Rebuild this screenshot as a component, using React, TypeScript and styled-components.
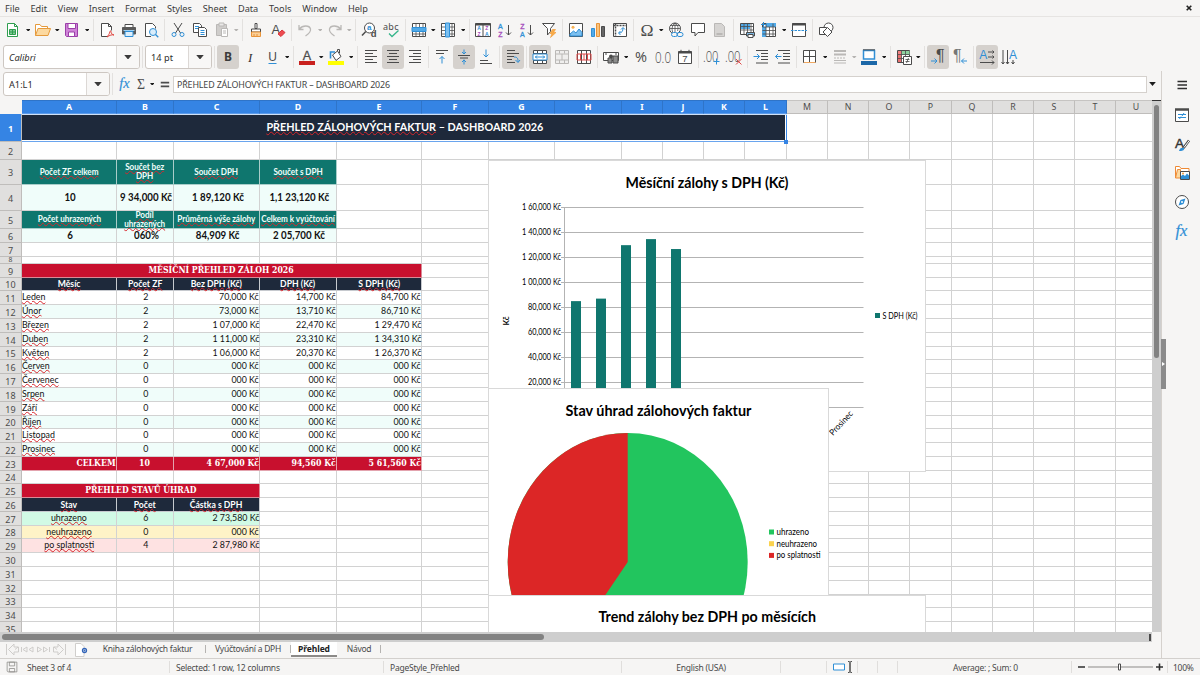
import React, { ReactNode } from 'react';
import styled, { createGlobalStyle, css } from 'styled-components';

const GlobalStyle = createGlobalStyle`
  * {
    box-sizing: border-box;
  }

  body {
    margin: 0;
    overflow: hidden;
    font-family: 'Noto Sans', sans-serif;
    font-size: 9.2px;
    color: #3b3b3b;
    background: #f6f5f4;
  }
`;

const Window = styled.div`
  width: 1200px;
  height: 675px;
  display: flex;
  flex-direction: column;
  background: #f6f5f4;
  overflow: hidden;
`;

const MenuBar = styled.nav`
  height: 17px;
  flex: none;
  display: flex;
  align-items: center;
  padding: 0 8px 0 5px;
  gap: 10.8px;
  border-bottom: 1px solid #e6e4e2;
`;

const MenuItem = styled.span`
  white-space: nowrap;
`;

const CloseButton = styled.span`
  margin-left: auto;
  display: flex;
`;

const Toolbar = styled.div<{ $height: number; $start: number }>`
  height: ${({ $height }) => $height}px;
  flex: none;
  display: flex;
  align-items: center;
  padding-left: ${({ $start }) => $start}px;
`;

const ToolButton = styled.span<{ $active?: boolean }>`
  width: 22px;
  height: 24px;
  flex: none;
  display: flex;
  align-items: center;
  justify-content: center;
  border-radius: 3px;
  background: ${({ $active }) => ($active ? '#d5d1cd' : 'transparent')};
`;

const Separator = styled.span`
  width: 5.1px;
  height: 22px;
  flex: none;
  display: flex;
  justify-content: center;

  &::before {
    content: '';
    width: 1px;
    height: 100%;
    background: #e3e1df;
  }
`;

const ArrowSlot = styled.span<{ $dim?: boolean }>`
  width: 7.5px;
  flex: none;
  display: flex;
  justify-content: center;
  color: ${({ $dim }) => ($dim ? '#b5b3b1' : '#1c1c1c')};
`;

const ComboBox = styled.div<{ $width: number }>`
  width: ${({ $width }) => $width}px;
  height: 24px;
  flex: none;
  display: flex;
  border: 1px solid #cdc7c2;
  border-radius: 3px;
  background: #fff;
  overflow: hidden;
`;

const ComboText = styled.span<{ $italic?: boolean }>`
  flex: 1;
  display: flex;
  align-items: center;
  padding-left: 5px;
  color: #2e2e2e;
  font-style: ${({ $italic }) => ($italic ? 'italic' : 'normal')};
`;

const ComboButton = styled.span`
  width: 23px;
  display: flex;
  align-items: center;
  justify-content: center;
  border-left: 1px solid #dcd8d5;
  background: #f8f7f6;
`;

const Workspace = styled.div`
  flex: 1;
  min-height: 0;
  display: flex;
`;

const Editor = styled.main`
  width: 1161px;
  display: flex;
  flex-direction: column;
`;

const FormulaBar = styled.div`
  height: 29px;
  flex: none;
  display: flex;
  align-items: center;
  padding: 0 5px 3px 3px;
`;

const FormulaButton = styled.span<{ $width: number }>`
  width: ${({ $width }) => $width}px;
  flex: none;
  display: flex;
  justify-content: center;
`;

const FormulaInput = styled.div`
  flex: 1;
  height: 17px;
  margin-right: 2px;
  display: flex;
  align-items: center;
  padding-left: 3px;
  background: #fff;
  border: 1px solid #d5d1cd;
  color: #444;
  font-size: 8.9px;
  letter-spacing: -0.14px;
`;

const SheetFrame = styled.div`
  height: 532px;
  flex: none;
  display: flex;
`;

const Sheet = styled.div`
  width: 1152px;
  position: relative;
  overflow: hidden;
  background: #fff;
`;

const Row = styled.div<{ $height: number }>`
  display: flex;
  height: ${({ $height }) => $height}px;
`;

const Corner = styled.div`
  width: 22px;
  flex: none;
  background: #f6f5f4;
`;

const ColumnHeader = styled.div<{ $width: number; $selected: boolean }>`
  width: ${({ $width }) => $width}px;
  flex: none;
  display: flex;
  align-items: center;
  justify-content: center;
  border-right: 1px solid ${({ $selected }) => ($selected ? '#2f74c8' : '#bfbdbb')};
  border-top: 1px solid ${({ $selected }) => ($selected ? '#2f74c8' : '#c6c4c2')};
  border-bottom: 1px solid ${({ $selected }) => ($selected ? '#5c9cec' : '#bfbdbb')};
  background: ${({ $selected }) => ($selected ? '#3584e4' : '#e0dfde')};
  color: ${({ $selected }) => ($selected ? '#fff' : '#4c4c4c')};
  font-size: 8.8px;
  font-weight: ${({ $selected }) => ($selected ? 700 : 400)};
`;

const RowHeader = styled.div<{ $selected: boolean; $small: boolean }>`
  width: 22px;
  flex: none;
  display: flex;
  align-items: center;
  justify-content: center;
  border-right: 1px solid #bfbdbb;
  border-bottom: 1px solid #bfbdbb;
  background: ${({ $selected }) => ($selected ? '#3584e4' : '#e0dfde')};
  color: ${({ $selected }) => ($selected ? '#fff' : '#4c4c4c')};
  font-size: ${({ $small }) => ($small ? 6.8 : 9)}px;
  font-weight: ${({ $selected }) => ($selected ? 700 : 400)};
  line-height: ${({ $small }) => ($small ? '6px' : '13px')};
  padding-top: ${({ $small }) => ($small ? 0 : 1)}px;
`;

type CellKind = 'plain' | 'kpiHead' | 'kpi' | 'section' | 'head' | 'total' | 'title';

const serifBold = css`
  font-family: 'DejaVu Serif Condensed', 'DejaVu Serif', serif;
  font-stretch: condensed;
  font-size: 8.8px;
  font-weight: 700;
  color: #fff;
  background: #c8102e;
`;

const cellKinds = {
  plain: css`
    font-size: 9.3px;
    color: #111;
  `,
  kpiHead: css`
    font-size: 8.6px;
    font-weight: 700;
    line-height: 8.6px;
    letter-spacing: -0.05px;
    color: #f0fdfa;
    background: #0f766e;
    border-color: #a9cdc9;
  `,
  kpi: css`
    font-size: 10.5px;
    font-weight: 700;
    color: #111;
    background: #f0fdfa;
  `,
  section: css`
    ${serifBold}
    border-color: #d98a96;
  `,
  total: css`
    ${serifBold}
    border-color: #e3a3ae;
  `,
  head: css`
    font-size: 9.2px;
    font-weight: 700;
    color: #fff;
    background: #1e293b;
    border-color: #c6c9ce;
  `,
  title: css`
    font-size: 12px;
    font-weight: 700;
    color: #fff;
    background: #1e293b;
    border: 0;
    padding-bottom: 2px;
    box-shadow: inset 0 1px 0 #cfe0f6, inset 0 -1px 0 #6aa5ee, inset -1px 0 0 #3584e4, inset 0 -2px 0 #fff,
      inset -2px 0 0 #fff;
  `,
};

// horizontal squeeze that gives Lato the narrower Calibri proportions
const squeeze: Record<CellKind, number> = {
  plain: 0.95,
  kpiHead: 0.945,
  kpi: 0.925,
  section: 0.98,
  total: 0.99,
  head: 0.94,
  title: 0.9,
};

const Cell = styled.div<{ $width: number; $kind: CellKind; $align?: string; $bg?: string; $nudge?: boolean }>`
  width: ${({ $width }) => $width}px;
  flex: none;
  display: flex;
  align-items: center;
  justify-content: ${({ $align }) => $align || 'center'};
  border-right: 1px solid #d2d2d2;
  border-bottom: 1px solid #d2d2d2;
  font-family: Lato, sans-serif;
  line-height: 1.08;
  text-align: center;
  white-space: pre;
  ${({ $kind }) => cellKinds[$kind]}
  ${({ $bg }) => $bg && `background: ${$bg};`}
  ${({ $nudge }) => $nudge && 'padding-left: 2px;'}
`;

const origins: Record<string, string> = { 'flex-start': 'left', 'flex-end': 'right' };

const CellText = styled.span<{ $kind: CellKind; $align?: string }>`
  display: inline-block;
  transform: scaleX(${({ $kind }) => squeeze[$kind]});
  transform-origin: ${({ $align }) => origins[$align || ''] || 'center'};
`;

const Misspelled = styled.span`
  text-decoration: underline wavy #d8262c 0.6px;
  text-underline-offset: -0.4px;
  text-decoration-skip-ink: none;
`;

const SelectionHandle = styled.div`
  position: absolute;
  left: 784px;
  top: 40px;
  width: 4px;
  height: 4px;
  background: #3584e4;
`;

const ChartObject = styled.section<{ $x: number; $y: number; $width: number; $height: number }>`
  position: absolute;
  left: ${({ $x }) => $x}px;
  top: ${({ $y }) => $y}px;
  width: ${({ $width }) => $width}px;
  height: ${({ $height }) => $height}px;
  background: #fff;
  border: 1px solid #d9d9d9;
  overflow: hidden;

  svg {
    display: block;
    font-family: Lato, sans-serif;
  }
`;

const VerticalScroll = styled.div`
  width: 9px;
  padding: 4px 2px 0;
  background: #cecece;
  border-top: 1px solid #333;
`;

const VerticalThumb = styled.div`
  height: 253px;
  border-radius: 3px;
  background: #828282;
`;

const HorizontalScroll = styled.div`
  width: 1152px;
  height: 10px;
  flex: none;
  display: flex;
  align-items: center;
  justify-content: space-between;
  padding: 0 1px 0 2px;
  background: #cecece;
`;

const HorizontalThumb = styled.div`
  width: 542px;
  height: 6px;
  border-radius: 3px;
  background: #828282;
`;

const ScrollEnd = styled.div`
  width: 2px;
  height: 7px;
  background: #4a4a4a;
`;

const TabBar = styled.div`
  height: 16px;
  flex: none;
  display: flex;
  align-items: flex-start;
  padding-left: 6px;
`;

const TabNav = styled.div`
  width: 84px;
  height: 15px;
  display: flex;
  align-items: center;
  gap: 8px;
`;

const Tab = styled.div<{ $width: number; $active?: boolean }>`
  width: ${({ $width }) => $width}px;
  height: 15px;
  display: flex;
  align-items: center;
  justify-content: center;
  border-bottom: 2px solid ${({ $active }) => ($active ? '#8c8a88' : 'transparent')};
  background: ${({ $active }) => ($active ? '#fff' : 'transparent')};
  color: ${({ $active }) => ($active ? '#222' : '#4a4a4a')};
  font-weight: ${({ $active }) => ($active ? 700 : 400)};
  font-size: 8.5px;
  letter-spacing: ${({ $active }) => ($active ? -0.1 : -0.26)}px;
  white-space: nowrap;
`;

const TabDivider = styled.span<{ $hidden?: boolean }>`
  width: 1px;
  height: 8px;
  margin-top: 3px;
  background: ${({ $hidden }) => ($hidden ? 'transparent' : '#b5b3b1')};
`;

const SideBar = styled.aside`
  flex: 1;
  display: flex;
  border-left: 1px solid #d5d1cd;
`;

const SideHandle = styled.div`
  width: 5px;
  height: 50px;
  margin-top: 268px;
  margin-left: -1px;
  display: flex;
  align-items: center;
  background: #8b8b8b;
`;

const SideIcons = styled.div`
  flex: 1;
  display: flex;
  flex-direction: column;
  align-items: center;
  padding: 6px 3px 0 0;
`;

const SideIcon = styled.span<{ $gap?: number }>`
  height: 16px;
  margin-bottom: ${({ $gap }) => $gap ?? 13}px;
  display: flex;
  align-items: center;
`;

const StatusBar = styled.footer`
  height: 17px;
  flex: none;
  display: flex;
  align-items: center;
  border-top: 1px solid #d3d0cd;
  color: #4a4a4a;
  font-size: 8.5px;
  letter-spacing: -0.24px;
`;

const StatusField = styled.div<{ $width: number; $align?: string; $pad?: number }>`
  width: ${({ $width }) => $width}px;
  height: 12px;
  flex: none;
  display: flex;
  align-items: center;
  justify-content: ${({ $align }) => $align || 'flex-start'};
  gap: 9px;
  padding-left: ${({ $pad }) => $pad ?? 6}px;
  border-right: 1px solid #e0dedc;
  white-space: nowrap;

  &:last-child {
    border-right: 0;
  }
`;

const DARK = '#4b4b4b';
const BLUE = '#2f8fd6';
const PURPLE = '#a347ba';
const DIM = '#bab8b6';
const SANS = 'Liberation Sans, sans-serif';
const SERIF = 'Liberation Serif, serif';

const icons: Record<string, ReactNode> = {
  newSheet: (
    <>
      <path d="M2.500 1.500h7l3 3v10h-10z" fill="#fff" stroke="#2f9e4f" />
      <path d="M9.500 1.500v3h3" stroke="#2f9e4f" />
      <path d="M4.500 7.500h6v5h-6zM4.500 10h6M7.500 7.500v5" fill="#7fcb95" stroke="#2f9e4f" />
    </>
  ),
  open: (
    <>
      <path d="M.5 13.500v-11H5l1.500 2h6v2" fill="#fff" stroke="#e59a3c" />
      <path d="M.5 13.500l2.500-7h12.500l-2.500 7z" fill="#fcd9a0" stroke="#e59a3c" />
    </>
  ),
  save: (
    <>
      <path d="M1.500 1.500h12v13h-11l-1-1z" fill="#cf83d8" stroke="#9b3fa8" />
      <path d="M4 1.500h7.500v5H4z" fill="#fff" stroke="#9b3fa8" />
      <path d="M4.500 10h6v4.500h-6z" fill="#fff" stroke="#9b3fa8" />
    </>
  ),
  pdf: (
    <>
      <path d="M9 14.500H2.500v-13h7l3 3v4" fill="#fff" stroke={DARK} />
      <path d="M9.500 1.500v3h3" stroke={DARK} />
      <path d="M8 15c1-1.500 2.500-3 3-5.500 0-1 1-1 1 0 0 2 1 3 3 3.500-2-.5-4 0-7 2z" stroke="#e0443e" />
    </>
  ),
  print: (
    <>
      <path d="M4 5V2.500h8V5" fill="#fff" stroke={DARK} />
      <path d="M1.500 5.500h13V12h-13z" fill="#5a5a5a" stroke="#5a5a5a" />
      <path d="M4 9.500h8v5H4z" fill="#dceefb" stroke={BLUE} />
      <path d="M2.500 8.500h11" stroke="#9bd0f5" />
    </>
  ),
  preview: (
    <>
      <path d="M8 14.500H2.500v-13h7l3 3v2" fill="#fff" stroke={DARK} />
      <circle cx="10" cy="10" r="3.500" fill="#d9edfb" stroke={BLUE} />
      <path d="M12.500 12.500l2.800 2.800" stroke={BLUE} strokeWidth="1.300" />
    </>
  ),
  cut: (
    <>
      <path d="M4 1l6.500 10M12 1L5.500 11" stroke={DARK} />
      <circle cx="4" cy="12.500" r="2" stroke={BLUE} />
      <circle cx="12" cy="12.500" r="2" stroke={BLUE} />
    </>
  ),
  copy: (
    <>
      <path d="M1.500 1.500h6l2 2v7h-8z" fill="#fff" stroke={DARK} />
      <path d="M3 4.500h4M3 6.500h3" stroke={BLUE} />
      <path d="M6.500 5.500h6l2 2v7h-8z" fill="#fff" stroke={DARK} />
      <path d="M8.500 8.500h4M8.500 10.500h4M8.500 12.500h4" stroke={BLUE} />
    </>
  ),
  paste: (
    <>
      <path d="M2.500 2.500h10v11h-10z" fill="#cfcdcb" stroke={DIM} />
      <path d="M5 1h5v3H5z" fill="#e9e8e7" stroke={DIM} />
      <path d="M7.500 6.500h6v8h-6z" fill="#fff" stroke={DIM} />
      <path d="M9 9h3M9 11h3" stroke={DIM} />
    </>
  ),
  brush: (
    <>
      <path d="M7 1.500h2v5H7z" fill="#fff" stroke={DARK} />
      <path d="M3.500 7h9v3h-9z" fill="#fff" stroke={DARK} />
      <path d="M3.500 10h9v4.500h-9z" fill="#fbcf97" stroke="#e8943a" />
      <path d="M6 12v2M9 12v2" stroke="#e8943a" />
    </>
  ),
  clear: (
    <>
      <text x="1.500" y="11.500" fontSize="13" fontFamily={SANS} fill={DARK}>A</text>
      <path d="M8 12l4-4 3 2.500-4 4z" fill="#ee4b50" stroke="#d8363c" />
    </>
  ),
  undo: <path d="M2 3v4.500h4.500M2.500 7c3-4 10-4 11 0 .6 3-2 5-5 7" stroke={DIM} strokeWidth="1.300" />,
  redo: <path d="M14 3v4.500H9.500M13.500 7c-3-4-10-4-11 0-.6 3 2 5 5 7" stroke={DIM} strokeWidth="1.300" />,
  find: (
    <>
      <circle cx="8.500" cy="6" r="5" fill="#fff" stroke={DARK} />
      <path d="M4.800 9.500L1 13.500" stroke={DARK} strokeWidth="1.500" />
      <text x="6" y="8" fontSize="8" fontFamily={SANS} fontWeight="700" fill={BLUE}>a</text>
      <text x="9.800" y="15" fontSize="9.500" fontFamily={SANS} fontWeight="700" fill={DARK}>d</text>
    </>
  ),
  spell: (
    <>
      <text x="0" y="8" fontSize="9" fill={DARK} textLength="15.500">abc</text>
      <path d="M6 11.500l3 3 6.500-6" stroke="#35b58a" strokeWidth="1.300" />
    </>
  ),
  rowOps: (
    <>
      <path d="M1.500 1.500h13v13h-13z" fill="#fff" stroke={DARK} />
      <path d="M5 1.500v13M8.500 1.500v13M12 1.500v13M1.500 12h13" stroke={DARK} strokeWidth=".8" />
      <path d="M1 5.500h14v4H1z" fill="#52aae8" stroke={BLUE} />
    </>
  ),
  colOps: (
    <>
      <path d="M1.500 1.500h13v13h-13z" fill="#fff" stroke={DARK} />
      <path d="M1.500 5h13M1.500 8.500h13M1.500 12h13M12 1.500v13" stroke={DARK} strokeWidth=".8" />
      <path d="M5.500 1h4v14h-4z" fill="#7cc0f0" stroke={BLUE} />
    </>
  ),
  sort: (
    <>
      <path d="M.5 1.500h15v13H.5z" fill="#fff" stroke={DARK} />
      <path d="M.5 2.500h15" stroke={DARK} strokeWidth="2" />
      <path d="M8 2v12.500" stroke={DARK} />
      <g fontSize="5" fontWeight="700" fontFamily={SANS}>
        <text x="2.300" y="8" fill={BLUE}>A</text>
        <text x="2.500" y="14" fill={PURPLE}>Z</text>
        <text x="10.200" y="8" fill={PURPLE}>Z</text>
        <text x="10" y="14" fill={BLUE}>A</text>
      </g>
    </>
  ),
  sortAsc: (
    <>
      <text x="1" y="6.500" fontSize="7" fontFamily={SANS} fill={BLUE} stroke={BLUE} strokeWidth=".3">A</text>
      <text x="1.200" y="15" fontSize="7" fontFamily={SANS} fill={PURPLE} stroke={PURPLE} strokeWidth=".3">Z</text>
      <path d="M11.500 3v10M9 10.500l2.500 2.500 2.500-2.500" stroke={DARK} />
    </>
  ),
  sortDesc: (
    <>
      <text x="1.200" y="6.500" fontSize="7" fontFamily={SANS} fill={PURPLE} stroke={PURPLE} strokeWidth=".3">Z</text>
      <text x="1" y="15" fontSize="7" fontFamily={SANS} fill={BLUE} stroke={BLUE} strokeWidth=".3">A</text>
      <path d="M11.500 3v10M9 10.500l2.500 2.500 2.500-2.500" stroke={DARK} />
    </>
  ),
  filter: (
    <>
      <path d="M1.500 1.500h12l-4 5v3L6.500 13V6.500z" fill="#fff" stroke={DARK} />
      <path d="M11.500 7.500h3l-2 3h2.500l-5.500 5 1.500-4H9z" fill="#f9ad4a" stroke="#f2952b" strokeWidth=".6" />
    </>
  ),
  image: (
    <>
      <path d="M1.500 1.500h13v13h-13z" fill="#fff" stroke={DARK} />
      <circle cx="5" cy="5.300" r="1.500" fill="#f8b252" />
      <path d="M2 14v-2l3.500-3 2.500 2 3-4 3 3.500V14z" fill="#7cc0f0" stroke={BLUE} />
    </>
  ),
  chart: (
    <>
      <path d="M1.500 6.500h3v8h-3z" fill="#52aae8" stroke={BLUE} />
      <path d="M6.500 1.500h3v13h-3z" fill="#f9c27b" stroke="#e8943a" />
      <path d="M11.500 4.500h3v10h-3z" fill="#666" stroke={DARK} />
    </>
  ),
  pivot: (
    <>
      <path d="M1.500 1.500h13v13h-13z" fill="#fff" stroke={DARK} />
      <path d="M1.500 3.500h13M3.500 1.500v13" stroke={DARK} strokeWidth="1.500" strokeDasharray="2 1" />
      <path d="M7 11c3 0 4-2 4-5M9 7.500l2-2 2 2M8.500 9l-2 2 2 2" stroke={BLUE} />
    </>
  ),
  omega: <text x="1.500" y="14.300" fontSize="17.500" fontFamily={SERIF} fill={DARK}>Ω</text>,
  link: (
    <>
      <circle cx="7" cy="6.500" r="5.500" fill="#fff" stroke={DARK} />
      <path d="M1.500 6.500h11M7 1v10M3 3.500h8M7 1c-4 3-3 8-2 10M7 1c4 3 3 6 2.500 8" stroke={DARK} strokeWidth=".8" />
      <rect x="3.500" y="10.500" width="6" height="4" rx="2" fill="#f6f5f4" stroke={BLUE} />
      <rect x="9" y="10.500" width="6" height="4" rx="2" stroke={BLUE} />
    </>
  ),
  comment: <path d="M1.500 1.500h13v9H8l-3 3.500v-3.500H1.500z" fill="#fff" stroke={DARK} />,
  headerFooter: (
    <>
      <path d="M2.500 1.500h7l3 3v10h-10z" fill="#d6d4d2" stroke={DIM} />
      <path d="M4.500 12h6" stroke={DIM} strokeWidth="2" />
    </>
  ),
  printArea: (
    <>
      <path d="M1.500 1.500h13v11h-13z" fill="#fff" stroke={DARK} />
      <path d="M2 2h9v5H2z" fill="#52aae8" />
      <path d="M5 1.500v11M8.500 1.500v11M12 1.500v11M1.500 4.500h13M1.500 8h13" stroke={DARK} strokeWidth=".8" />
      <path d="M7.500 10.500h8V14h-8z" fill="#7cb7e2" stroke={DARK} />
      <path d="M9 12.500h5v3H9z" fill="#fff" stroke={DARK} />
    </>
  ),
  freeze: (
    <>
      <path d="M1.500 1.500h13v13h-13z" fill="#fff" stroke={DARK} />
      <path d="M1 5h4v10H1zM5 1h10v4H5z" fill="#52aae8" />
      <path d="M5 1.500v13M8.500 5v9.500M12 1.500v13M1.500 5h13M1.500 8.500h13M1.500 12h13" stroke={DARK} strokeWidth=".8" />
      <path d="M2.500 0v5M0 2.500h5" stroke={BLUE} />
    </>
  ),
  split: (
    <>
      <path d="M1.500 1.500h13v13h-13z" fill="#fff" stroke={DARK} />
      <path d="M1 2.500h14" stroke={DARK} strokeWidth="2" />
      <path d="M0 8.500h16" stroke={BLUE} strokeDasharray="2.500 1" />
    </>
  ),
  shapes: (
    <>
      <circle cx="10.500" cy="5.500" r="4.500" fill="#fff" stroke={DARK} />
      <path d="M1.500 5.500h7v7h-7z" fill="#fff" stroke={DARK} />
      <path d="M9.500 5.500l4.500 4.500-4.500 4.500L5 10z" fill="#fff" stroke={DARK} />
    </>
  ),
  bold: <text x="4" y="12.200" fontSize="12" fontWeight="700" fill="#3b3b3b">B</text>,
  italic: <text x="6" y="12.500" fontSize="13" fontStyle="italic" fontFamily={SERIF} fill="#333">I</text>,
  underline: (
    <>
      <text x="4.300" y="11.500" fontSize="12" fontFamily={SANS} fill={DARK}>U</text>
      <path d="M4.500 14.500h8" stroke={BLUE} />
    </>
  ),
  fontColor: (
    <>
      <text x="3.800" y="10.500" fontSize="12.500" fontFamily={SANS} fill={DARK} stroke={DARK} strokeWidth=".3">A</text>
      <path d="M0 12h16v4H0z" fill="#c9211e" />
    </>
  ),
  highlight: (
    <>
      <path d="M4.500 6l5-4 3.500 5.500-5 4z" fill="#fff" stroke={DARK} />
      <path d="M2.500 9.500V3H7" stroke={BLUE} strokeWidth="1.600" />
      <path d="M9.500 2V.5h2V4" stroke={DARK} />
      <path d="M0 12h16v4H0z" fill="#ffff00" />
    </>
  ),
  alignLeft: <path d="M2 1.500h12M2 4.500h8M2 7.500h12M2 10.500h8M2 13.500h12" stroke={DARK} />,
  alignCenter: <path d="M2 1.500h12M4 4.500h8M2 7.500h12M4 10.500h8M2 13.500h12" stroke={DARK} />,
  alignRight: <path d="M2 1.500h12M6 4.500h8M2 7.500h12M6 10.500h8M2 13.500h12" stroke={DARK} />,
  alignTop: (
    <>
      <path d="M2 1.500h12M2 4.500h8" stroke={DARK} />
      <path d="M8 14.500v-7M5.500 10L8 7.500l2.500 2.500" stroke={BLUE} />
    </>
  ),
  alignMiddle: (
    <>
      <path d="M2 6.500h12M4 9h8" stroke={DARK} />
      <path d="M8 .5v4.500M6 3l2 2 2-2M8 15.500v-5M6 13l2-2 2 2" stroke={BLUE} />
    </>
  ),
  alignBottom: (
    <>
      <path d="M2 11.500h8M2 14.500h12" stroke={DARK} />
      <path d="M8 .5v7M5.500 5.500L8 8l2.500-2.500" stroke={BLUE} />
    </>
  ),
  wrap: (
    <>
      <path d="M2 1.500h8M2 4.500h12M2 7.500h7M2 10.500h5M2 13.500h8" stroke={DARK} />
      <path d="M9 8c4 0 4 2 4 5M10.500 11l2.500 2.500 2-2.500" stroke={BLUE} />
    </>
  ),
  merge: (
    <>
      <path d="M1.500 1.500h13v13h-13z" fill="#fff" stroke={DARK} />
      <path d="M5.500 1.500v13M10.500 1.500v13M1.500 4.500h13M1.500 11.500h13" stroke={DARK} />
      <path d="M1 5h14v6H1z" fill="#fff" stroke={BLUE} />
      <path d="M3 8h10M5 6.500L3.500 8 5 9.500M11 6.500L12.500 8 11 9.500" stroke={BLUE} />
    </>
  ),
  unmerge: (
    <>
      <path d="M1.500 1.500h13v13h-13z" fill="#efeeed" stroke={DIM} />
      <path d="M5.500 1.500v3M10.500 1.500v3M5.500 11v3.500M10.500 11v3.500M1.500 5h13M1.500 11h13M8 5v6" stroke={DIM} />
    </>
  ),
  splitCells: (
    <>
      <path d="M1.500 1.500h13v13h-13z" fill="#fff" stroke={DARK} />
      <path d="M5.500 1.500v13M10.500 1.500v13" stroke={DARK} />
      <path d="M1 5h14v6H1zM4.500 5v6M8 5v6M11.500 5v6" stroke="#e04848" />
    </>
  ),
  currency: (
    <>
      <path d="M.5 3.500h15v8H.5z" fill="#fff" stroke={DARK} />
      <path d="M2 5h2M12 5h2" stroke={DARK} />
      <circle cx="8" cy="7.500" r="2" fill={DARK} />
      <path d="M5 9h4v5H5zM10 7h5v7h-5z" fill="#8d8d8d" stroke={DARK} />
    </>
  ),
  percent: <text x="2" y="13" fontSize="14" fontFamily="Open Sans, sans-serif" fill={DARK} textLength="12" lengthAdjust="spacingAndGlyphs">%</text>,
  number: <text x="0" y="13.500" fontSize="14.500" fontFamily="Open Sans, sans-serif" fontWeight="300" fill={DARK} textLength="16" lengthAdjust="spacingAndGlyphs">0.0</text>,
  date: (
    <>
      <path d="M1.500 2.500h13v12h-13z" fill="#fff" stroke={DARK} />
      <path d="M1.500 3.500h13" stroke={DARK} strokeWidth="2" />
      <path d="M4 .8v3M12 .8v3" stroke={DARK} />
      <text x="5.200" y="13" fontSize="9.500" fontFamily={SANS} fill={DARK}>7</text>
    </>
  ),
  addDecimal: (
    <>
      <text x="-1" y="13" fontSize="14" fontFamily="Open Sans, sans-serif" fontWeight="300" fill={DARK} textLength="15.500" lengthAdjust="spacingAndGlyphs">.00</text>
      <path d="M12.500 9.500v6M9.500 12.500h6" stroke={BLUE} />
    </>
  ),
  removeDecimal: (
    <>
      <text x="-1" y="13" fontSize="14" fontFamily="Open Sans, sans-serif" fontWeight="300" fill={DARK} textLength="15.500" lengthAdjust="spacingAndGlyphs">.00</text>
      <path d="M10 10l5.500 5.500M15.500 10L10 15.500" stroke="#e04848" />
    </>
  ),
  indentMore: (
    <>
      <path d="M3 1.500h12M8 4.500h7M8 7.500h7M8 10.500h7M3 14h12" stroke={DARK} />
      <path d="M.5 7.500h6M4 5l2.500 2.500L4 10" stroke={BLUE} />
    </>
  ),
  indentLess: (
    <>
      <path d="M3 1.500h12M8 4.500h7M8 7.500h7M8 10.500h7M3 14h12" stroke={DARK} />
      <path d="M.5 7.500h6M3 5L.5 7.500 3 10" stroke={BLUE} />
    </>
  ),
  borders: (
    <>
      <path d="M1.500 1.500h12v12h-12z" fill="#fff" stroke={DARK} />
      <path d="M7.500 1.500v12M1.500 7.500h12" stroke={DARK} />
      <path d="M2 13.500h11.500" stroke="#f0a860" />
    </>
  ),
  borderStyle: (
    <>
      <path d="M2 2h12M2 5.500h12" stroke={DIM} strokeWidth="2" />
      <path d="M2 9h12" stroke={DIM} strokeDasharray="2 1" />
      <path d="M2 11.500h12M2 14h12" stroke={DIM} />
    </>
  ),
  borderColor: (
    <>
      <path d="M2.500 1.500h11v8.500h-11z" fill="#fff" stroke={BLUE} strokeWidth="1.500" />
      <path d="M2 .8h12" stroke={DARK} />
      <path d="M0 12h16v4H0z" fill="#1c68a8" />
    </>
  ),
  conditional: (
    <>
      <path d="M1.500 1.500h12v12h-12z" fill="#fff" stroke={DARK} />
      <path d="M2 2h3.500v4H2z" fill="#f28080" />
      <path d="M6 2h7.500v4H6z" fill="#8fd3a0" />
      <path d="M2 6h3.500v7H2z" fill="#e87070" />
      <path d="M5.500 1.500v12M9.500 1.500v12M1.500 5.500h12M1.500 9.500h12" stroke={DARK} strokeWidth=".8" />
      <path d="M7.500 7.500h8v8h-8z" fill="#fff" stroke={DARK} />
      <path d="M9.500 10.500h4M9.500 12.500h4M12.500 9l-2 5" stroke={DARK} strokeWidth=".8" />
    </>
  ),
  leftToRight: (
    <>
      <text x="6" y="12" fontSize="16" fontFamily={SANS} fill={DARK}>¶</text>
      <path d="M1 12h6M4.500 9.500L7 12l-2.500 2.500" stroke={BLUE} />
    </>
  ),
  rightToLeft: (
    <>
      <text x="1" y="12" fontSize="16" fontFamily={SANS} fill="#777">¶</text>
      <path d="M15 12H9.500M12 9.500L9.500 12l2.500 2.500" stroke={BLUE} />
    </>
  ),
  textHorizontal: (
    <>
      <text x="0.300" y="9.500" fontSize="12" fontFamily={SANS} fill={BLUE}>A</text>
      <path d="M9 3h6M13.500 1.500L15 3l-1.500 1.500M9 8h6M13.500 6.500L15 8l-1.500 1.500M1 13.500h14M13 11.500l2 2-2 2" stroke={DARK} />
    </>
  ),
  textVertical: (
    <>
      <text x="8" y="9.500" fontSize="12" fontFamily={SANS} fill={BLUE}>A</text>
      <path d="M2 1v14M.5 13L2 15l1.500-2M6.500 1v14M5 13l1.500 2L8 13M12 11v4M10.500 13l1.500 2 1.500-2" stroke={DARK} />
    </>
  ),
  fx: (
    <text x="1.500" y="12.500" fontSize="16.500" fontStyle="italic" fontFamily={SERIF} fill={BLUE} stroke={BLUE} strokeWidth=".2">
      fx
    </text>
  ),
  sigma: <text x="2.500" y="14" fontSize="17" fontFamily={SERIF} fill={DARK}>Σ</text>,
  equals: <path d="M4 6h9M4 10h9" stroke={DARK} strokeWidth="1.800" />,
  hamburger: <path d="M3.500 4.500H13M3.500 8H13M3.500 11.500H13" stroke="#2e2e2e" strokeWidth="1.300" />,
  properties: (
    <>
      <path d="M1.500 2.500h13v12h-13z" fill="#fff" stroke={DARK} />
      <path d="M1 2.500h14" stroke={DARK} strokeWidth="2.500" />
      <path d="M4 7.500h8M4 10.500h8M10 6l-2 3M7 9.500l-1.500 2.500" stroke={BLUE} />
    </>
  ),
  styles: (
    <>
      <text x="1" y="11.500" fontSize="13.500" fontFamily={SANS} fill="#333" stroke="#333" strokeWidth=".4">A</text>
      <path d="M15 4.500L9.500 12" stroke={DARK} strokeWidth="2.600" />
      <path d="M15 4.800L10 11.500" stroke="#fff" strokeWidth="1" />
      <path d="M5 15c.5-3 3-4 5-3 1 2-2 3.500-5 3z" fill={BLUE} />
    </>
  ),
  gallery: (
    <>
      <path d="M1.500 13V1.500h4l1.500 2h8v3" fill="#fff" stroke="#ee8a35" />
      <path d="M3.500 4.500L1.500 13h5v-8.500z" fill="#fcd9a0" stroke="#ee8a35" />
      <path d="M6.500 6.500h9v8h-9z" fill="#fff" stroke={DARK} />
      <path d="M7 14v-3l2-1.500 2 1.500 2-2.500 2 2V14z" fill={BLUE} />
      <circle cx="9" cy="8.500" r=".9" fill="#f2952b" />
    </>
  ),
  navigator: (
    <>
      <circle cx="8" cy="8" r="6.500" fill="#fff" stroke={DARK} />
      <path d="M11.500 4.500L9.500 10l-5 1.500 2-5.500z" fill={BLUE} />
      <circle cx="8" cy="8" r="1" fill="#fff" />
    </>
  ),
  diskDim: (
    <>
      <path d="M1.500 1.500h13v13h-12l-1-1z" stroke="#8a8886" />
      <path d="M4.500 1.500h7v5h-7zM4.500 10h7v4.500h-7z" stroke="#8a8886" />
    </>
  ),
};

const Icon = ({ name, size = 16 }: { name: string; size?: number }) => (
  <svg width={size} height={size} viewBox="0 0 16 16" fill="none" overflow="visible">
    {icons[name]}
  </svg>
);

const Arrow = ({ width = 5 }: { width?: number }) => (
  <svg width={width} height={width / 2 + 0.5} viewBox="0 0 10 6">
    <path d="M0 0h10L5 6z" fill="currentColor" />
  </svg>
);

// '|' is a separator, 'v' a dropdown arrow, '-v' a disabled one, '*' marks a pressed button
const standardTools =
  'newSheet v open v save v | pdf print preview | cut copy paste -v | brush clear | undo -v redo -v | find spell | rowOps v colOps v | sort sortAsc sortDesc filter | image chart pivot | omega v link comment headerFooter | printArea freeze v split | shapes';

const formattingTools =
  '*bold italic underline v | fontColor v highlight v | alignLeft *alignCenter alignRight | alignTop *alignMiddle alignBottom | *wrap | *merge unmerge splitCells | currency v percent number date | addDecimal removeDecimal | indentMore indentLess | borders v borderStyle -v borderColor v | conditional v | *leftToRight rightToLeft | *textHorizontal textVertical';

const Tools = ({ items }: { items: string }) => (
  <>
    {items.split(' ').map((item, index) => {
      if (item === '|') return <Separator key={index} />;
      if (item === 'v' || item === '-v') {
        return (
          <ArrowSlot key={index} $dim={item === '-v'}>
            <Arrow width={4.5} />
          </ArrowSlot>
        );
      }
      return (
        <ToolButton key={index} $active={item.startsWith('*')}>
          <Icon name={item.replace('*', '')} />
        </ToolButton>
      );
    })}
  </>
);

const menus = ['File', 'Edit', 'View', 'Insert', 'Format', 'Styles', 'Sheet', 'Data', 'Tools', 'Window', 'Help'];

const columnWidths = [95, 57, 86, 77, 85, 67, 66, 67, 41, 41, 41, 42, 41, 41, 41, 42, 41, 41, 41, 41, 41];

const rowHeights = [
  28, 18, 25, 26, 18, 14, 14, 7, 14, 13, 14, 14, 14, 14, 13, 14, 14, 14, 14, 13, 14, 14, 14, 13, 14, 14, 14, 13, 14,
  14, 14, 14, 13, 14, 14,
];

interface CellData {
  text: string;
  kind: CellKind;
  span?: number;
  align?: string;
  bg?: string;
  misspelled?: boolean;
}

const cellsOf = (kind: CellKind, texts: string[], misspelled = false): CellData[] =>
  texts.map((text) => ({ text, kind, misspelled }));

const sheetRows: Record<number, CellData[]> = {
  1: [{ text: 'PŘEHLED ZÁLOHOVÝCH FAKTUR – DASHBOARD 2026', kind: 'title', span: 12 }],
  3: cellsOf('kpiHead', ['Počet ZF celkem', 'Součet bez\nDPH', 'Součet DPH', 'Součet s DPH'], true),
  4: cellsOf('kpi', ['10', '9 34,000 Kč', '1 89,120 Kč', '1,1 23,120 Kč']),
  5: cellsOf('kpiHead', ['Počet uhrazených', 'Podíl\nuhrazených', 'Průměrná výše zálohy', 'Celkem k vyúčtování'], true),
  6: cellsOf('kpi', ['6', '060%', '84,909 Kč', '2 05,700 Kč']),
  9: [{ text: 'MĚSÍČNÍ PŘEHLED ZÁLOH 2026', kind: 'section', span: 5 }],
  10: cellsOf('head', ['Měsíc', 'Počet ZF', 'Bez DPH (Kč)', 'DPH (Kč)', 'S DPH (Kč)'], true),
  23: [
    { text: 'CELKEM', kind: 'total', align: 'flex-end' },
    { text: '10', kind: 'total' },
    { text: '4 67,000 Kč', kind: 'total', align: 'flex-end' },
    { text: '94,560 Kč', kind: 'total', align: 'flex-end' },
    { text: '5 61,560 Kč', kind: 'total', align: 'flex-end' },
  ],
  25: [{ text: 'PŘEHLED STAVŮ ÚHRAD', kind: 'section', span: 3 }],
  26: cellsOf('head', ['Stav', 'Počet', 'Částka s DPH'], true),
};

const months = [
  ['Leden', '2', '70,000 Kč', '14,700 Kč', '84,700 Kč'],
  ['Únor', '2', '73,000 Kč', '13,710 Kč', '86,710 Kč'],
  ['Březen', '2', '1 07,000 Kč', '22,470 Kč', '1 29,470 Kč'],
  ['Duben', '2', '1 11,000 Kč', '23,310 Kč', '1 34,310 Kč'],
  ['Květen', '2', '1 06,000 Kč', '20,370 Kč', '1 26,370 Kč'],
  ['Červen', '0', '000 Kč', '000 Kč', '000 Kč'],
  ['Červenec', '0', '000 Kč', '000 Kč', '000 Kč'],
  ['Srpen', '0', '000 Kč', '000 Kč', '000 Kč'],
  ['Září', '0', '000 Kč', '000 Kč', '000 Kč'],
  ['Říjen', '0', '000 Kč', '000 Kč', '000 Kč'],
  ['Listopad', '0', '000 Kč', '000 Kč', '000 Kč'],
  ['Prosinec', '0', '000 Kč', '000 Kč', '000 Kč'],
];

months.forEach((values, index) => {
  sheetRows[11 + index] = values.map((text, column) => ({
    text,
    kind: 'plain',
    align: column === 0 ? 'flex-start' : column === 1 ? 'center' : 'flex-end',
    bg: index % 2 ? '#f0fdfa' : undefined,
    misspelled: column === 0,
  }));
});

const statuses = [
  ['#d1fae5', 'uhrazeno', '6', '2 73,580 Kč'],
  ['#fef3c7', 'neuhrazeno', '0', '000 Kč'],
  ['#fee2e2', 'po splatnosti', '4', '2 87,980 Kč'],
];

statuses.forEach(([bg, ...values], index) => {
  sheetRows[27 + index] = values.map((text, column) => ({
    text,
    bg,
    kind: 'plain',
    align: column === 2 ? 'flex-end' : 'center',
    misspelled: column === 0,
  }));
});

const renderText = ({ text, kind, misspelled }: CellData) => {
  if (kind === 'title') {
    const [marked, rest] = text.split(' –');
    return (
      <>
        <Misspelled>{marked}</Misspelled> –{rest}
      </>
    );
  }
  return misspelled ? <Misspelled>{text}</Misspelled> : text;
};

const SheetRow = ({ number }: { number: number }) => {
  const filled = sheetRows[number] || [];
  let column = 0;
  const cells = filled.map((cell) => {
    const span = cell.span || 1;
    const width = columnWidths.slice(column, column + span).reduce((sum, value) => sum + value, 0);
    const nudge = cell.kind === 'kpi' || (cell.kind === 'plain' && cell.align === 'center' && !cell.misspelled);
    column += span;
    return (
      <Cell key={column} $width={width} $kind={cell.kind} $align={cell.align} $bg={cell.bg} $nudge={nudge}>
        <CellText $kind={cell.kind} $align={cell.align}>
          {renderText(cell)}
        </CellText>
      </Cell>
    );
  });

  return (
    <Row $height={rowHeights[number - 1]}>
      <RowHeader $selected={number === 1} $small={number === 8}>
        {number}
      </RowHeader>
      {cells}
      {columnWidths.slice(column).map((width, index) => (
        <Cell key={`empty-${index}`} $width={width} $kind="plain" />
      ))}
    </Row>
  );
};

const axisLabels = [
  '1 60,000 Kč',
  '1 40,000 Kč',
  '1 20,000 Kč',
  '1 00,000 Kč',
  '80,000 Kč',
  '60,000 Kč',
  '40,000 Kč',
  '20,000 Kč',
];
const monthlyTotals = [84700, 86710, 129470, 134310, 126370];

interface FitTextProps {
  x: number;
  y: number;
  width: number;
  size: number;
  bold?: boolean;
  children: string;
}

const FitText = ({ x, y, width, size, bold, children }: FitTextProps) => (
  <text
    x={x}
    y={y}
    fontSize={size}
    fontWeight={bold ? 700 : 400}
    textLength={width}
    lengthAdjust="spacingAndGlyphs"
    fill="#000"
  >
    {children}
  </text>
);

const BarChart = () => (
  <ChartObject $x={488} $y={60} $width={438} $height={312}>
    <svg width="436" height="310">
      <FitText x={136.5} y={26.5} width={163} size={15.8} bold>
        Měsíční zálohy s DPH (Kč)
      </FitText>
      {axisLabels.map((label, index) => {
        const width = index < 4 ? 39 : 33;
        return (
          <React.Fragment key={label}>
            <path d={`M72 ${46.5 + index * 25}H374.5`} stroke="#b3b3b3" />
            <FitText x={72 - width} y={48.8 + index * 25} width={width} size={8.8}>
              {label}
            </FitText>
          </React.Fragment>
        );
      })}
      <path d="M75.5 46v201M72 246.5H374.5" stroke="#b3b3b3" />
      {monthlyTotals.map((total, index) => (
        <rect key={total} x={82 + index * 25} y={246 - total / 800} width="10" height={total / 800} fill="#0f766e" />
      ))}
      <g transform="translate(20 164.5) rotate(-90)">
        <FitText x={0} y={0} width={9} size={7.6} bold>
          Kč
        </FitText>
      </g>
      <rect x="386" y="152" width="5" height="5" fill="#0f766e" />
      <FitText x={393.5} y={157.5} width={35} size={8.8}>
        S DPH (Kč)
      </FitText>
      <g transform="translate(344 275) rotate(-47)">
        <FitText x={0} y={0} width={30} size={8.6}>
          Prosinec
        </FitText>
      </g>
    </svg>
  </ChartObject>
);

const legend = [
  { label: 'uhrazeno', color: '#22c55e', width: 32.5 },
  { label: 'neuhrazeno', color: '#fbd24e', width: 40.5 },
  { label: 'po splatnosti', color: '#dc2626', width: 44 },
];

const PieChart = () => (
  <ChartObject $x={488} $y={288} $width={341} $height={208}>
    <svg width="339" height="206">
      <FitText x={76.5} y={26.5} width={186} size={15.8} bold>
        Stav úhrad zálohových faktur
      </FitText>
      <ellipse cx="138.7" cy="173" rx="120" ry="129" fill="#22c55e" />
      <path d="M138.7 173V44A120 129 0 0 0 68.2 277.4z" fill="#dc2626" />
      {legend.map(({ label, color, width }, index) => (
        <React.Fragment key={label}>
          <rect x="280" y={140.5 + index * 11.7} width="5" height="5" fill={color} />
          <FitText x={287.5} y={145.8 + index * 11.7} width={width} size={8.8}>
            {label}
          </FitText>
        </React.Fragment>
      ))}
    </svg>
  </ChartObject>
);

const TrendChart = () => (
  <ChartObject $x={488} $y={495} $width={438} $height={60}>
    <svg width="436" height="58">
      <FitText x={109.5} y={25.5} width={217.5} size={15.8} bold>
        Trend zálohy bez DPH po měsících
      </FitText>
    </svg>
  </ChartObject>
);

const SheetTabs = () => (
  <TabBar>
    <TabNav>
      <svg width="60" height="13" viewBox="0 0 60 13" fill="none" stroke="#cfcdcb">
        <path d="M.5 1v11M2.500 6.500L8 1v3h4.500v5H8v3zM9 6.500l3-2.500" />
        <path d="M15.500 4v5M21 4v5l-4-2.500zM27 4v5l-4-2.500z" />
        <path d="M31.500 4v5l4-2.500zM37.500 4v5l4-2.500zM43.500 4v5" />
        <path d="M59.500 1v11M57.500 6.500L52 1v3h-4.500v5H52v3zM51 6.500L48 4" />
      </svg>
      <svg width="14" height="14" viewBox="0 0 14 14">
        <path d="M1.500.5H7l3 3v10H1.500z" fill="#fff" stroke="#d0cecc" />
        <circle cx="10.500" cy="7.500" r="2" fill="#fff" stroke="#3465b8" strokeWidth="1.300" />
        <path d="M10.500 6.500v2M9.500 7.500h2" stroke="#3465b8" strokeWidth=".8" />
      </svg>
    </TabNav>
    <Tab $width={115}>Kniha zálohových faktur</Tab>
    <TabDivider />
    <Tab $width={84}>Vyúčtování a DPH</Tab>
    <TabDivider />
    <Tab $width={46} $active>
      Přehled
    </Tab>
    <TabDivider $hidden />
    <Tab $width={42}>Návod</Tab>
    <TabDivider />
  </TabBar>
);

const App = () => (
  <>
    <GlobalStyle />
    <Window>
      <MenuBar>
        {menus.map((menu) => (
          <MenuItem key={menu}>{menu}</MenuItem>
        ))}
        <CloseButton>
          <svg width="6" height="6" viewBox="0 0 6 6">
            <path d="M.7.7l4.600 4.600M5.300.7L.7 5.300" stroke="#222" strokeWidth="1.600" />
          </svg>
        </CloseButton>
      </MenuBar>
      <Toolbar $height={26} $start={2}>
        <Tools items={standardTools} />
      </Toolbar>
      <Toolbar $height={28} $start={3}>
        <ComboBox $width={137}>
          <ComboText $italic>Calibri</ComboText>
          <ComboButton>
            <Arrow width={8} />
          </ComboButton>
        </ComboBox>
        <Separator />
        <ComboBox $width={67}>
          <ComboText>14 pt</ComboText>
          <ComboButton>
            <Arrow width={8} />
          </ComboButton>
        </ComboBox>
        <Separator />
        <Tools items={formattingTools} />
      </Toolbar>
      <Workspace>
        <Editor>
          <FormulaBar>
            <ComboBox $width={107}>
              <ComboText>A1:L1</ComboText>
              <ComboButton>
                <Arrow width={8} />
              </ComboButton>
            </ComboBox>
            <Separator />
            <FormulaButton $width={19}>
              <Icon name="fx" size={14} />
            </FormulaButton>
            <FormulaButton $width={14}>
              <Icon name="sigma" size={13} />
            </FormulaButton>
            <ArrowSlot>
              <Arrow width={4.5} />
            </ArrowSlot>
            <FormulaButton $width={17.4}>
              <Icon name="equals" size={15} />
            </FormulaButton>
            <FormulaInput>PŘEHLED ZÁLOHOVÝCH FAKTUR – DASHBOARD 2026</FormulaInput>
            <ArrowSlot>
              <Arrow width={7} />
            </ArrowSlot>
          </FormulaBar>
          <SheetFrame>
            <Sheet>
              <Row $height={14}>
                <Corner />
                {columnWidths.map((width, index) => (
                  <ColumnHeader key={index} $width={width} $selected={index < 12}>
                    {String.fromCharCode(65 + index)}
                  </ColumnHeader>
                ))}
              </Row>
              {rowHeights.map((_, index) => (
                <SheetRow key={index} number={index + 1} />
              ))}
              <SelectionHandle />
              <BarChart />
              <PieChart />
              <TrendChart />
            </Sheet>
            <VerticalScroll>
              <VerticalThumb />
            </VerticalScroll>
          </SheetFrame>
          <HorizontalScroll>
            <HorizontalThumb />
            <ScrollEnd />
          </HorizontalScroll>
          <SheetTabs />
        </Editor>
        <SideBar>
          <SideHandle>
            <svg width="5" height="6" viewBox="0 0 5 6">
              <path d="M1 1l3 2-3 2z" fill="#fff" />
            </svg>
          </SideHandle>
          <SideIcons>
            <SideIcon $gap={14}>
              <Icon name="hamburger" />
            </SideIcon>
            {['properties', 'styles', 'gallery', 'navigator', 'fx'].map((name) => (
              <SideIcon key={name}>
                <Icon name={name} />
              </SideIcon>
            ))}
          </SideIcons>
        </SideBar>
      </Workspace>
      <StatusBar>
        <StatusField $width={170}>
          <Icon name="diskDim" size={12} />
          Sheet 3 of 4
        </StatusField>
        <StatusField $width={214}>Selected: 1 row, 12 columns</StatusField>
        <StatusField $width={238}>PageStyle_Přehled</StatusField>
        <StatusField $width={159} $align="center" $pad={0}>
          English (USA)
        </StatusField>
        <StatusField $width={46} />
        <StatusField $width={31}>
          <svg width="20" height="12" viewBox="0 0 20 12" fill="none">
            <path d="M.5 3h11v6H.5z" fill="#fff" stroke={BLUE} />
            <path d="M15 .5c2 0 2 .5 2 1v9c0 .5 0 1-2 1M19 .5c-2 0-2 .5-2 1v9c0 .5 0 1 2 1" stroke={DARK} />
          </svg>
        </StatusField>
        <StatusField $width={20} />
        <StatusField $width={20} />
        <StatusField $width={174} $align="center" $pad={2}>
          Average: ; Sum: 0
        </StatusField>
        <StatusField $width={96} $align="center" $pad={0}>
          <svg width="86" height="12" viewBox="0 0 86 12" fill="none">
            <path d="M1 6h7M79 6h7M82.500 2.500v7" stroke="#2e2e2e" strokeWidth="1.600" />
            <path d="M11 6h65" stroke="#8d8b89" />
            <path d="M41.500 3h2v6h-2z" fill="#fff" stroke={DARK} />
          </svg>
        </StatusField>
        <StatusField $width={32} $pad={5}>
          100%
        </StatusField>
      </StatusBar>
    </Window>
  </>
);

export default App;
